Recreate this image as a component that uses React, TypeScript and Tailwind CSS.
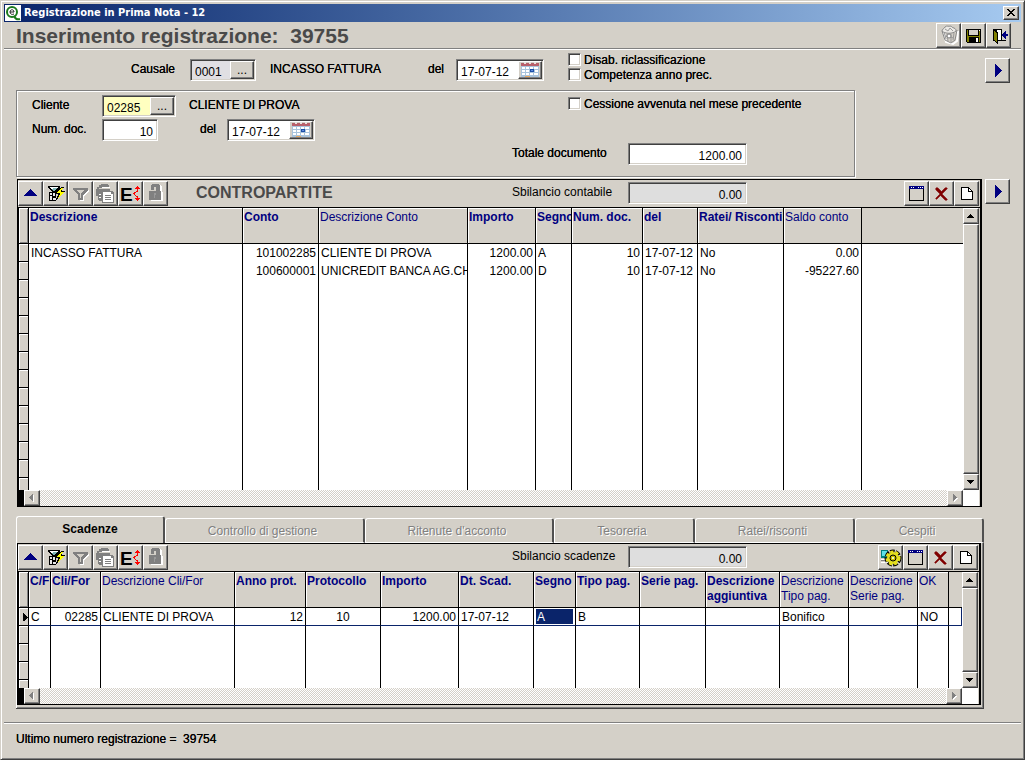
import React from 'react'
import clsx from 'clsx'

const raised =
  'border border-t-white border-l-white border-r-[#404040] border-b-[#404040] shadow-[inset_-1px_-1px_0_#808080] bg-[#d4d0c8]'
const sunken =
  'border border-t-[#808080] border-l-[#808080] border-r-white border-b-white shadow-[inset_1px_1px_0_#404040,inset_-1px_-1px_0_#d4d0c8] p-px'
// labels are painted twice, so they look heavier than plain text
const heavy = '[text-shadow:0_0_0_#000]'

/* ---------- icons ---------- */

const Icon = ({ children }: { children: React.ReactNode }) => (
  <svg width="23" height="23" viewBox="1 1 23 23" shapeRendering="crispEdges" aria-hidden="true" className="block">
    {children}
  </svg>
)

const UpIcon = () => (
  <Icon>
    <path d="M12 8h1v1h1v1h1v1h1v1h1v1h1v1h1v1H6v-1h1v-1h1v-1h1v-1h1v-1h1V9h1z" fill="#000080" />
  </Icon>
)

const RightIcon = () => (
  <Icon>
    <path d="M10 6h1v1h1v1h1v1h1v1h1v1h1v1h1v1h-1v1h-1v1h-1v1h-1v1h-1v1h-1v1h-1z" fill="#000080" />
  </Icon>
)

const FilterRunIcon = () => (
  <Icon>
    <path d="M5 5h12v2h-1v1h-1v1h-1v1h-1v1H9v-1H8V9H7V8H6V7H5z" fill="#000" />
    <path d="M7 6h8v1H7zM8 7h2v1H8z" fill="#fff" />
    <path d="M10 7h4v1h-4zM9 8h4v1H9zM10 9h2v1h-2z" fill="#7fb5b5" />
    <path d="M6 11h7v9H6z" fill="#000" />
    <path d="M7 12h2v2H7zM10 12h2v3h-2zM7 15h2v4H7zM10 17h3v2h-3z" fill="#e8e8e8" />
    <path d="M18 6h3v1h-1v1h-1v2h3v1h-1v1h-1v1h-1v1h-1v1h-1v1h-1v1h-1v1h-1v1h-1v-2h1v-2h1v-2h-3v-1h1v-2h1v-1h1V8h1V7h1z" fill="#000" />
    <path d="M18 7h2v1h-1v1h-1v2h3v1h-1v1h-1v1h-1v1h-1v1h-1v1h-1v-1h1v-2h1v-2h-3v-1h1v-1h1v-1h1V8h1z" fill="#ffff00" />
  </Icon>
)

const FunnelIcon = () => (
  <Icon>
    <path d="M7 9h14v1l-5 6v4h-4v-4L7 10z" fill="#fff" />
    <path d="M5 7h15v2l-5 5v5h-5v-5L5 9z" fill="#808080" />
    <path d="M9 9h7l-3 4v4h-1v-4z" fill="#d4d0c8" />
  </Icon>
)

const CopyIcon = () => (
  <Icon>
    <path d="M8 3h7v1h1v2H9v1H6v2H5v6H3V8h1V6h2V4h2z" fill="#808080" />
    <path d="M6 8h11v3H9v9H6v-1H5V9h1z" fill="#808080" />
    <path d="M9 6h8v1H9zM6 13h2v1H6zM6 16h2v1H6z" fill="#fff" />
    <path d="M9 10h10l2 2v10H9z" fill="#808080" />
    <path d="M10 11h8v2h2v8H10z" fill="#fff" />
    <path d="M12 14h6v1h-6zM12 16h6v1h-6zM12 18h6v1h-6z" fill="#808080" />
  </Icon>
)

const ExpandIcon = () => (
  <Icon>
    <text x="2" y="20" fontFamily="Liberation Sans" fontWeight="700" fontSize="19">
      E
    </text>
    <g fill="#ff0000">
      <path d="M19 5h1v1h1v1h1v1h-2v3h-1V8h-2V7h1V6h1zM18 10h1v1h-1zM16 11h2v1h-2zM15 12h2v1h-2zM16 13h1v1h-1zM17 14h1v1h-1zM18 15h1v1h-1z" />
      <path d="M19 15h1v2h2v1h-1v1h-1v1h-1v-1h-1v-1h-1v-1h2z" />
    </g>
  </Icon>
)

const LockIcon = () => (
  <Icon>
    <path d="M10 4h8v1h1v6h1v9H8v-1h9V10h-2V5h-5z" fill="#fff" />
    <path d="M9 3h7v1h1v6h1v9H6v-9h7V6h-2v3H8V4h1z" fill="#808080" />
    <path d="M11 12h2v2h-2zM11 14h1v3h-1z" fill="#999" />
  </Icon>
)

const WindowIcon = () => (
  <Icon>
    <path d="M5 5h15v15H5z" fill="#000" />
    <path d="M6 8h13v11H6z" fill="#d4d0c8" />
    <path d="M5 5h15v3H5z" fill="#000080" />
    <path d="M7 6h1v1H7zM14 6h1v1h-1zM16 6h1v1h-1zM18 6h1v1h-1zM9 6h1v1H9z" fill="#fff" />
  </Icon>
)

const DeleteIcon = () => (
  <Icon>
    <path
      d="M7 7h2v1h1v1h1v1h1v1h1v-1h1V9h1V8h1V7h2v1h-1v1h-1v1h-1v1h-1v1h-1v2h1v1h1v1h1v1h1v1h1v1h-2v-1h-1v-1h-1v-1h-1v-1h-1v-1h-1v1h-1v1H9v1H8v1H7v-1h1v-1h1v-1h1v-1h1v-2h-1v-1H9v-1H8V9H7z"
      fill="#800000"
      stroke="#800000"
      strokeWidth="1"
      shapeRendering="auto"
    />
  </Icon>
)

const PageIcon = () => (
  <Icon>
    <path d="M7 6h8v1h1v1h1v1h1v1h1v9H7z" fill="#000" />
    <path d="M8 7h6v4h4v7H8z" fill="#fff" />
    <path d="M15 8h1v1h1v1h-2z" fill="#fff" />
  </Icon>
)

const TrashIcon = () => (
  <Icon>
    <g shapeRendering="auto" fill="none">
      <path d="M8 9l2 10 7 2 4-3 1-10" stroke="#fff" strokeWidth="2" />
      <path d="M6 8l3 9 6 3 4-3 2-10" stroke="#8a8a8a" />
      <path d="M6 8c0-2 2-2 3-4 2-2 4 0 5-1 2 0 2 2 4 2 2 1 2 2 2 3-3 3-11 3-14 0z" fill="#eceae6" stroke="#8a8a8a" />
      <path d="M9 6l3 2 2-3 3 3M8 9l2 7M11 11l1 7M15 11v8M18 10l-1 7M9 13l9 2" stroke="#9a9a9a" />
      <circle cx="13" cy="13" r="2" fill="#fff" stroke="#808080" />
    </g>
  </Icon>
)

const SaveIcon = () => (
  <Icon>
    <path d="M5 6h15v14H6v-1H5z" fill="#000" />
    <path d="M6 7h13v12H6z" fill="#808000" />
    <path d="M7 6h11v7H7z" fill="#000" />
    <path d="M8 7h9v5H8z" fill="#d4d0c8" />
    <path d="M8 14h10v6H8z" fill="#000" />
    <path d="M15 15h2v4h-2zM18 7h1v1h-1z" fill="#fff" />
  </Icon>
)

const ExitIcon = () => (
  <Icon>
    <path d="M7 6h9v11h4v1H7z" fill="#000" />
    <path d="M11 7h4v10h-4z" fill="#fff" />
    <path d="M7 6h1v1h1v1h1v1h2v12h-1v-1h-1v-1H9v-1H7z" fill="#000" />
    <path d="M8 8h1v1h1v1h1v9h-1v-1H9v-1H8z" fill="#808000" />
    <path d="M16 11h1v-1h1V9h1V8h1v3h2v2h-2v3h-1v-1h-1v-1h-1v-1h-1z" fill="#000080" />
  </Icon>
)

const GearIcon = () => (
  <Icon>
    <path d="M3 5h7v8H3z" fill="#008080" />
    <path d="M4 6h5v5H4z" fill="#5fe0e8" />
    <path d="M3 14h7v1H3zM3 17h8v1H3z" fill="#fff" />
    <path d="M3 15h7v1H3z" fill="#808080" />
    <g shapeRendering="auto">
      <circle cx="15" cy="13" r="6" fill="none" stroke="#000" strokeWidth="5" strokeDasharray="4 1" />
      <circle cx="15" cy="13" r="6" fill="#e0dc20" stroke="#e6e01c" strokeWidth="3" strokeDasharray="3 2" />
      <circle cx="15" cy="13" r="5" fill="#e0dc20" />
      <circle cx="15" cy="13" r="3" fill="#c8c400" stroke="#000" strokeWidth="1" />
      <circle cx="15" cy="13" r="1" fill="#fff" />
    </g>
  </Icon>
)

const CalendarIcon = () => (
  <svg width="18" height="16" viewBox="0 0 18 16" shapeRendering="crispEdges" aria-hidden="true">
    <path d="M0 1h18v14H0z" fill="#a9c4dc" />
    <path d="M0 1h18v3H0z" fill="#b8606a" />
    <path d="M3 0h2v2H3zM8 0h2v2H8zM13 0h2v2h-2z" fill="#e8e4e0" />
    <g fill="#fff">
      <path d="M1 5h3v2H1zM5 5h3v2H5zM9 5h3v2H9zM13 5h4v2h-4z" />
      <path d="M1 8h3v2H1zM5 8h3v2H5zM14 8h3v2h-3z" />
      <path d="M1 11h3v2H1zM5 11h3v2H5zM9 11h3v2H9zM13 11h4v2h-4z" />
    </g>
    <path d="M9 7h4v3H9z" fill="#1d4fa8" />
    <path d="M10 8h2v1h-2z" fill="#5f90e0" />
    <path d="M4 14h5v1H4z" fill="#e8a860" />
  </svg>
)

const AppLogo = () => (
  <svg width="16" height="16" viewBox="0 0 16 16" aria-hidden="true" className="bg-white">
    <circle cx="7" cy="7" r="5" fill="none" stroke="#1c7a1c" strokeWidth="2" />
    <path d="M9 11c1 2 3 4 6 3" fill="none" stroke="#1c7a1c" strokeWidth="2" />
    <path d="M5 7h4c0-3-4-3-4 0 0 2 2 3 4 2" fill="none" stroke="#222" strokeWidth="1" />
  </svg>
)

/* ---------- small controls ---------- */

const ToolButton = ({ title, children }: { title: string; children: React.ReactNode }) => (
  <button type="button" aria-label={title} className={clsx('size-[25px] shrink-0', raised)}>
    {children}
  </button>
)

type FieldProps = {
  id: string
  value: string
  width: string
  bg?: string
  right?: boolean
  button?: 'lookup' | 'calendar'
}

const Field = ({ id, value, width, bg = 'bg-white', right, button }: FieldProps) => (
  <div className={clsx('flex h-[22px] shrink-0', width, sunken)}>
    <input
      id={id}
      type="text"
      defaultValue={value}
      className={clsx('h-[18px] min-w-0 flex-1 px-[3px] pt-[3px] leading-[15px] outline-none', bg, right && 'text-right')}
    />
    {button && (
      <button
        type="button"
        aria-label={button === 'lookup' ? 'Cerca' : 'Calendario'}
        className={clsx('flex h-[18px] w-6 shrink-0 items-center justify-center', raised)}
      >
        {button === 'lookup' ? '...' : <CalendarIcon />}
      </button>
    )}
  </div>
)

const Check = ({ id, label }: { id: string; label: string }) => (
  <div className="flex h-[15px] items-start gap-[3px]">
    <input id={id} type="checkbox" className={clsx('size-[13px] appearance-none bg-white checked:bg-black', sunken)} />
    <label htmlFor={id} className={clsx('leading-[14px]', heavy)}>
      {label}
    </label>
  </div>
)

const Label = ({ id, className, children }: { id: string; className?: string; children: React.ReactNode }) => (
  <label htmlFor={id} className={clsx('shrink-0 pt-px leading-[18px]', className)}>
    {children}
  </label>
)

/* ---------- grid ---------- */

type Column = { title: string; width?: number; bold?: boolean; align?: 'right' | 'center' }

type GridProps = {
  columns: Column[]
  rows: string[][]
  emptyRows: number
  tail: string
  current?: number
  selectedCol?: number
}

const Arrow = ({ d, dim }: { d: string; dim?: boolean }) => (
  <svg width="14" height="14" viewBox="0 0 14 14" shapeRendering="crispEdges" aria-hidden="true" className="block">
    {dim && <path d={d} fill="#fff" transform="translate(1 1)" />}
    <path d={d} fill={dim ? '#808080' : '#000'} />
  </svg>
)

const ScrollButton = ({ title, d, dim }: { title: string; d: string; dim?: boolean }) => (
  <button type="button" aria-label={title} className={clsx('size-4 shrink-0', raised)}>
    <Arrow d={d} dim={dim} />
  </button>
)

const Grid = ({ columns, rows, emptyRows, tail, current, selectedCol }: GridProps) => {
  const all = [...rows, ...Array.from({ length: emptyRows }, () => [] as string[])]

  return (
    <div className="border-t border-black">
      <div className="flex pr-px">
        <div className="min-w-0 flex-1">
          <table className="w-full table-fixed border-separate border-spacing-0 border-l border-black bg-white">
            <colgroup>
              <col style={{ width: 10 }} />
              {columns.map((c, i) => (
                <col key={i} style={c.width ? { width: c.width } : undefined} />
              ))}
            </colgroup>
            <thead className="bg-[#d4d0c8] text-[#000080]">
              <tr className="h-9">
                <th className="border-r border-b border-black shadow-[inset_1px_1px_0_#fff,inset_-1px_-1px_0_#808080]" />
                {columns.map((c, i) => (
                  <th
                    key={i}
                    className={clsx(
                      'h-9 overflow-hidden border-b border-black pt-[2px] pl-px text-left align-top leading-[15px]',
                      c.bold ? 'font-bold' : 'font-normal',
                      i < columns.length - 1 && 'border-r shadow-[inset_1px_1px_0_#fff]',
                    )}
                  >
                    {c.title}
                  </th>
                ))}
              </tr>
            </thead>
            <tbody>
              {all.map((row, r) => (
                <tr key={r} className="h-[18px]">
                  <td className="h-[18px] border-r border-b border-black bg-[#d4d0c8] shadow-[inset_1px_1px_0_#fff]">
                    {r === current && (
                      <svg width="9" height="9" viewBox="0 0 9 9" shapeRendering="crispEdges" className="block">
                        <path d="M4 1h1v1h1v1h1v1h1v1h1v1H8v1H7v1H6v1H4z" />
                      </svg>
                    )}
                  </td>
                  {columns.map((c, i) => (
                    <td
                      key={i}
                      className={clsx(
                        'h-[18px] overflow-hidden pt-px align-top leading-4 whitespace-nowrap',
                        i < columns.length - 1 && 'border-r border-r-black',
                        r === current && 'border-b border-b-[#0a246a]',
                        r === current && i === columns.length - 1 && 'border-r border-r-[#0a246a]',
                        c.align === 'right' && 'text-right',
                        c.align === 'center' && 'text-center',
                        r === current && i === selectedCol
                          ? 'bg-[#0a246a] px-[3px] text-white shadow-[inset_2px_1px_0_#fff,inset_-2px_-1px_0_#fff]'
                          : 'px-[2px]',
                      )}
                    >
                      {row[i]}
                    </td>
                  ))}
                </tr>
              ))}
              <tr className={tail}>
                <td className="border-r border-black bg-[#d4d0c8] shadow-[inset_1px_1px_0_#fff]" />
                {columns.map((c, i) => (
                  <td key={i} className={clsx(i < columns.length - 1 && 'border-r border-black')} />
                ))}
              </tr>
            </tbody>
          </table>
        </div>
        <div className="flex w-4 shrink-0 flex-col bg-[#d4d0c8]">
          <ScrollButton title="Su" d="M6 5h1v1h1v1h1v1h1v1H3V8h1V7h1V6h1z" />
          <div className={clsx('flex-1', raised)} />
          <ScrollButton title="Giù" d="M3 5h7v1H9v1H8v1H7v1H6V8H5V7H4V6H3z" />
        </div>
      </div>
      <div className="flex h-4 pr-px">
        <div className="w-[6px] bg-black" />
        <ScrollButton title="Sinistra" dim d="M8 3v7H7V9H6V8H5V7H4V6h1V5h1V4h1V3z" />
        <div className="flex-1 bg-[repeating-conic-gradient(#d4d0c8_0_25%,#fff_0_50%)] bg-[length:2px_2px]" />
        <ScrollButton title="Destra" dim d="M5 3v7h1V9h1V8h1V7h1V6H8V5H7V4H6V3z" />
        <div className="w-4 bg-white" />
      </div>
    </div>
  )
}

const GridTools = () => (
  <div className="flex w-[178px] shrink-0">
    <ToolButton title="Inizio">
      <UpIcon />
    </ToolButton>
    <ToolButton title="Esegui filtro">
      <FilterRunIcon />
    </ToolButton>
    <ToolButton title="Filtro">
      <FunnelIcon />
    </ToolButton>
    <ToolButton title="Copia">
      <CopyIcon />
    </ToolButton>
    <ToolButton title="Espandi">
      <ExpandIcon />
    </ToolButton>
    <ToolButton title="Blocca">
      <LockIcon />
    </ToolButton>
  </div>
)

type PanelProps = { title?: string; id: string; label: string; extra?: React.ReactNode; children: React.ReactNode }

const Panel = ({ title, id, label, extra, children }: PanelProps) => (
  <section className="min-w-0 flex-1 border border-r-2 border-black">
    <div className="flex h-[27px] items-start pt-px pr-px">
      <GridTools />
      <h2 className="w-[316px] shrink-0 text-base leading-6 font-bold text-[#4a4a4a]">{title}</h2>
      <div className="flex items-start pt-px">
        <Label id={id} className="w-[116px]">
          {label}
        </Label>
        <Field id={id} value="0.00" width="w-[119px]" bg="bg-[#dedede]" right />
      </div>
      <div className="ml-auto flex">
        {extra}
        <ToolButton title="Finestra">
          <WindowIcon />
        </ToolButton>
        <ToolButton title="Elimina">
          <DeleteIcon />
        </ToolButton>
        <ToolButton title="Nuovo">
          <PageIcon />
        </ToolButton>
      </div>
    </div>
    {children}
  </section>
)

/* ---------- data ---------- */

const contropartite: Column[] = [
  { title: 'Descrizione', width: 214, bold: true },
  { title: 'Conto', width: 76, bold: true, align: 'right' },
  { title: 'Descrizione Conto', width: 149 },
  { title: 'Importo', width: 68, bold: true, align: 'right' },
  { title: 'Segno', width: 36, bold: true },
  { title: 'Num. doc.', width: 71, bold: true, align: 'right' },
  { title: 'del', width: 55, bold: true },
  { title: 'Ratei/ Risconti', width: 86, bold: true },
  { title: 'Saldo conto', width: 78, align: 'right' },
  { title: '' },
]

const contropartiteRows = [
  ['INCASSO FATTURA', '101002285', 'CLIENTE DI PROVA', '1200.00', 'A', '10', '17-07-12', 'No', '0.00'],
  ['', '100600001', 'UNICREDIT BANCA AG.CH', '1200.00', 'D', '10', '17-07-12', 'No', '-95227.60'],
]

const scadenze: Column[] = [
  { title: 'C/F', width: 22, bold: true },
  { title: 'Cli/For', width: 50, bold: true, align: 'right' },
  { title: 'Descrizione Cli/For', width: 134 },
  { title: 'Anno prot.', width: 71, bold: true, align: 'right' },
  { title: 'Protocollo', width: 75, bold: true, align: 'center' },
  { title: 'Importo', width: 78, bold: true, align: 'right' },
  { title: 'Dt. Scad.', width: 75, bold: true },
  { title: 'Segno', width: 42, bold: true },
  { title: 'Tipo pag.', width: 64, bold: true },
  { title: 'Serie pag.', width: 66, bold: true },
  { title: 'Descrizione aggiuntiva', width: 74, bold: true },
  { title: 'Descrizione Tipo pag.', width: 69 },
  { title: 'Descrizione Serie pag.', width: 69 },
  { title: 'OK', width: 31 },
  { title: '' },
]

const scadenzeRows = [
  ['C', '02285', 'CLIENTE DI PROVA', '12', '10', '1200.00', '17-07-12', 'A', 'B', '', '', 'Bonifico', '', 'NO'],
]

const tabs = [
  { title: 'Controllo di gestione', width: 'w-[200px]' },
  { title: "Ritenute d'acconto", width: 'w-[189px]' },
  { title: 'Tesoreria', width: 'w-[141px]' },
  { title: 'Ratei/risconti', width: 'w-[160px]' },
  { title: 'Cespiti', width: 'flex-1' },
]

const tabEdge = 'rounded-t-[3px] border-t border-l border-r-2 border-t-white border-l-white border-r-[#505050]'

const App = () => {
  return (
    <main className="flex min-h-screen min-w-[1025px] flex-col border border-t-[#d4d0c8] border-r-[#404040] border-b-[#404040] border-l-[#d4d0c8] bg-[#d4d0c8] p-[3px] font-['Liberation_Sans',Arial,sans-serif] text-[12px] text-black shadow-[inset_1px_1px_0_#fff,inset_-1px_-1px_0_#808080]">
      <div className="flex h-[18px] items-center gap-[3px] bg-linear-to-r from-[#0a246a] to-[#a6caf0] pr-[2px] pl-px">
        <AppLogo />
        <h1 className="flex-1 pt-px font-['DejaVu_Sans_Condensed','Noto_Sans',sans-serif] text-[11px] font-bold text-white">
          Registrazione in Prima Nota - 12
        </h1>
        <button type="button" aria-label="Chiudi" className={clsx('h-[14px] w-4', raised)}>
          <svg width="14" height="12" viewBox="0 0 14 12" shapeRendering="crispEdges" className="block">
            <path d="M3 2h2v1h1v1h2V3h1V2h2v1h-1v1H9v1H8v1h1v1h1v1h1v1H9V8H8V7H6v1H5v1H3V8h1V7h1V6h1V5H5V4H4V3H3z" />
          </svg>
        </button>
      </div>

      <header className="flex h-[27px] items-start justify-between border-b border-[#808080] pt-px pr-[10px] pl-3 shadow-[0_1px_0_#fff]">
        <div className="text-[21px] leading-[26px] font-bold whitespace-pre text-[#4a4a4a]">
          {'Inserimento registrazione:  39755'}
        </div>
        <div className="flex">
          <ToolButton title="Elimina registrazione">
            <TrashIcon />
          </ToolButton>
          <ToolButton title="Salva">
            <SaveIcon />
          </ToolButton>
          <ToolButton title="Esci">
            <ExitIcon />
          </ToolButton>
        </div>
      </header>

      <div className="flex flex-col pt-1 pr-[11px] pl-3">
        <div className="flex h-[37px] items-start">
          <div className="flex pt-[6px]">
            <Label id="causale" className={clsx('w-[174px] pr-[15px] text-right', heavy)}>
              Causale
            </Label>
            <Field id="causale" value="0001" width="w-[66px]" bg="bg-[#e0dfe3]" button="lookup" />
            <span className={clsx('w-[172px] pt-px pl-[14px] leading-[18px]', heavy)}>INCASSO FATTURA</span>
            <Label id="data" className={clsx('w-7', heavy)}>
              del
            </Label>
            <Field id="data" value="17-07-12" width="w-[88px]" button="calendar" />
          </div>
          <div className="pl-6">
            <Check id="disab" label="Disab. riclassificazione" />
            <Check id="competenza" label="Competenza anno prec." />
          </div>
          <div className="ml-auto pt-[5px]">
            <ToolButton title="Avanti">
              <RightIcon />
            </ToolButton>
          </div>
        </div>

        <div className="flex h-[87px] w-[839px] border border-[#808080] pt-1 pl-[15px] shadow-[1px_1px_0_#fff,inset_1px_1px_0_#fff]">
          <div className="flex w-[480px] flex-col gap-[2px]">
            <div className="flex">
              <Label id="cliente" className={clsx('w-[70px]', heavy)}>
                Cliente
              </Label>
              <Field id="cliente" value="02285" width="w-[74px]" bg="bg-[#ffffc0]" button="lookup" />
              <span className={clsx('pt-px pl-[13px] leading-[18px]', heavy)}>CLIENTE DI PROVA</span>
            </div>
            <div className="flex">
              <Label id="numdoc" className={clsx('w-[70px]', heavy)}>
                Num. doc.
              </Label>
              <Field id="numdoc" value="10" width="w-[56px]" right />
              <Label id="deldoc" className={clsx('w-[69px] pl-[42px]', heavy)}>
                del
              </Label>
              <Field id="deldoc" value="17-07-12" width="w-[88px]" button="calendar" />
            </div>
          </div>
          <div className="flex flex-col justify-between pt-[2px] pb-[11px]">
            <div className="pl-14">
              <Check id="cessione" label="Cessione avvenuta nel mese precedente" />
            </div>
            <div className="flex">
              <Label id="totale" className={clsx('w-[116px]', heavy)}>
                Totale documento
              </Label>
              <Field id="totale" value="1200.00" width="w-[119px]" right />
            </div>
          </div>
        </div>

        <div className="flex items-start gap-[3px] pt-[2px] pl-px">
          <Panel title="CONTROPARTITE" id="sbilancio-contabile" label="Sbilancio contabile">
            <Grid columns={contropartite} rows={contropartiteRows} emptyRows={11} tail="h-3" />
          </Panel>
          <ToolButton title="Dettaglio">
            <RightIcon />
          </ToolButton>
        </div>
      </div>

      <div className="pt-[9px] pr-[37px] pl-3">
        <div role="tablist" className="flex h-[27px] items-end">
          <button
            type="button"
            role="tab"
            aria-selected="true"
            className={clsx('h-[27px] w-[149px] pb-[3px] font-bold', tabEdge)}
          >
            Scadenze
          </button>
          {tabs.map((t) => (
            <button
              key={t.title}
              type="button"
              role="tab"
              aria-selected="false"
              className={clsx(
                'h-[25px] border-b border-b-white pt-px pr-1 text-[#808080] [text-shadow:1px_1px_0_#fff]',
                t.width,
                tabEdge,
              )}
            >
              {t.title}
            </button>
          ))}
        </div>
        <div className="flex border-r border-b border-[#404040] pr-[2px] pb-[3px] pl-px shadow-[inset_1px_0_0_#fff,inset_-1px_-1px_0_#808080]">
          <Panel
            id="sbilancio-scadenze"
            label="Sbilancio scadenze"
            extra={
              <ToolButton title="Genera scadenze">
                <GearIcon />
              </ToolButton>
            }
          >
            <Grid columns={scadenze} rows={scadenzeRows} emptyRows={3} tail="h-2" current={0} selectedCol={7} />
          </Panel>
        </div>
      </div>

      <footer className="mt-[13px] border-t border-[#808080] pt-[7px] pl-3 shadow-[inset_0_1px_0_#fff]">
        <p className={clsx('leading-[18px] whitespace-pre', heavy)}>{'Ultimo numero registrazione =  39754'}</p>
      </footer>
    </main>
  )
}

export default App
